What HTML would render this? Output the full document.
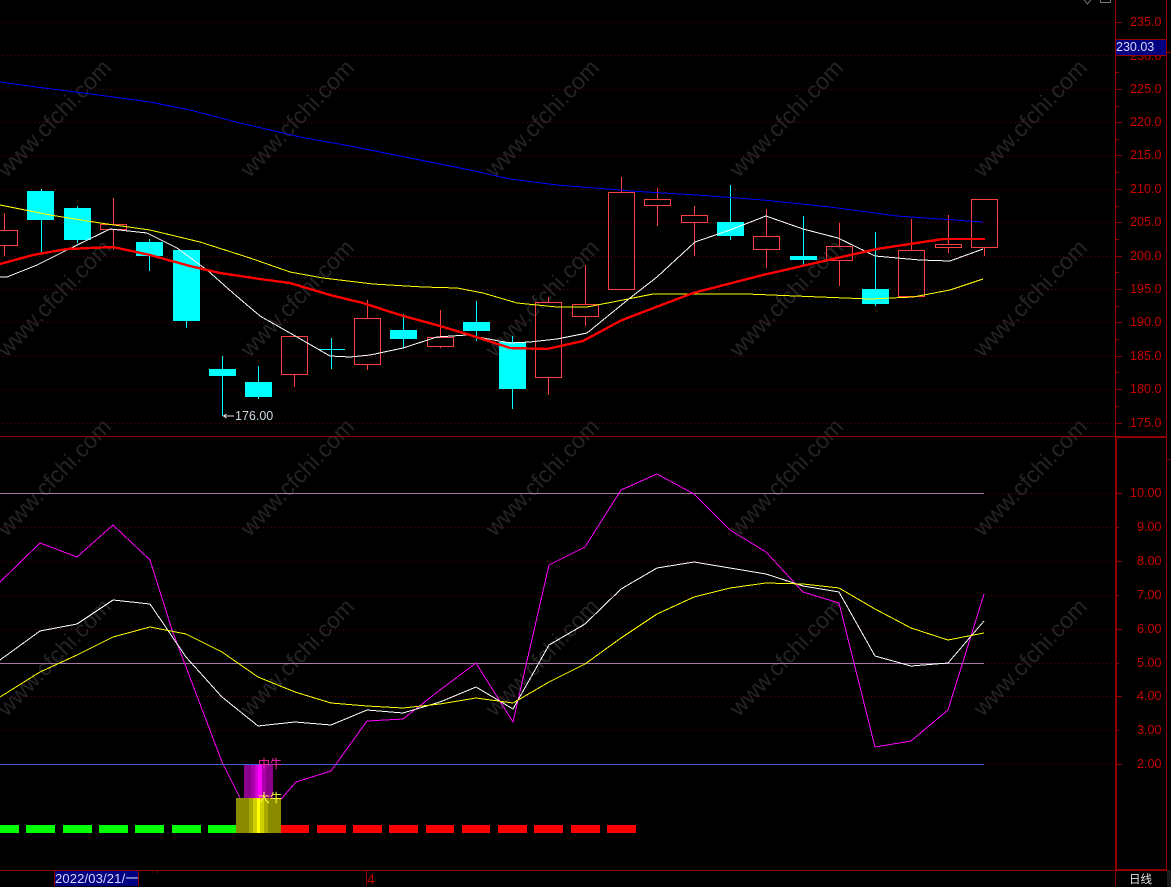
<!DOCTYPE html>
<html><head><meta charset="utf-8"><title>K</title>
<style>
html,body{margin:0;padding:0;background:#000;width:1171px;height:887px;overflow:hidden}
svg{display:block;font-family:"Liberation Sans","Noto Sans CJK SC",sans-serif}
.wm text{font-size:23px;fill:#242424;text-anchor:middle}
.ax text{font-size:12.6px;fill:#c80000;text-anchor:end}
.ln{fill:none;shape-rendering:crispEdges}
</style></head><body>
<svg width="1171" height="887" viewBox="0 0 1171 887" xmlns="http://www.w3.org/2000/svg">
<rect width="1171" height="887" fill="#000"/>
<g class="wm">
<text transform="translate(54,118) rotate(-46)" y="8">www.cfchi.com</text>
<text transform="translate(297,118) rotate(-46)" y="8">www.cfchi.com</text>
<text transform="translate(542,118) rotate(-46)" y="8">www.cfchi.com</text>
<text transform="translate(786,118) rotate(-46)" y="8">www.cfchi.com</text>
<text transform="translate(1030,118) rotate(-46)" y="8">www.cfchi.com</text>
<text transform="translate(54,298) rotate(-46)" y="8">www.cfchi.com</text>
<text transform="translate(297,298) rotate(-46)" y="8">www.cfchi.com</text>
<text transform="translate(542,298) rotate(-46)" y="8">www.cfchi.com</text>
<text transform="translate(786,298) rotate(-46)" y="8">www.cfchi.com</text>
<text transform="translate(1030,298) rotate(-46)" y="8">www.cfchi.com</text>
<text transform="translate(54,477) rotate(-46)" y="8">www.cfchi.com</text>
<text transform="translate(297,477) rotate(-46)" y="8">www.cfchi.com</text>
<text transform="translate(542,477) rotate(-46)" y="8">www.cfchi.com</text>
<text transform="translate(786,477) rotate(-46)" y="8">www.cfchi.com</text>
<text transform="translate(1030,477) rotate(-46)" y="8">www.cfchi.com</text>
<text transform="translate(54,657) rotate(-46)" y="8">www.cfchi.com</text>
<text transform="translate(297,657) rotate(-46)" y="8">www.cfchi.com</text>
<text transform="translate(542,657) rotate(-46)" y="8">www.cfchi.com</text>
<text transform="translate(786,657) rotate(-46)" y="8">www.cfchi.com</text>
<text transform="translate(1030,657) rotate(-46)" y="8">www.cfchi.com</text>
</g>
<!-- grid -->
<path d="M3 22.5H1112M3 55.5H1112M3 89.5H1112M3 122.5H1112M3 155.5H1112M3 189.5H1112M3 222.5H1112M3 256.5H1112M3 289.5H1112M3 322.5H1112M3 356.5H1112M3 389.5H1112M3 423.5H1112M3 493.5H1112M3 527.5H1112M3 561.5H1112M3 595.5H1112M3 629.5H1112M3 663.5H1112M3 696.5H1112M3 730.5H1112M3 764.5H1112" stroke="#640000" stroke-width="1" stroke-dasharray="1 3" fill="none" shape-rendering="crispEdges"/>
<!-- lower horizontals -->
<path d="M0 493.5H984" stroke="#a878a8" shape-rendering="crispEdges"/>
<path d="M0 663.5H984" stroke="#a878a8" shape-rendering="crispEdges"/>
<path d="M0 764.5H984" stroke="#3f5fd8" shape-rendering="crispEdges"/>
<!-- frame -->
<g shape-rendering="crispEdges">
<rect x="0" y="436" width="1116" height="1" fill="#900000"/>
<rect x="1115" y="0" width="1" height="436" fill="#a00000"/>
<rect x="1115" y="436" width="52" height="2" fill="#900000"/>
<rect x="1115" y="438" width="2" height="432" fill="#900000"/>
<rect x="1166" y="0" width="1" height="870" fill="#900000"/>
<rect x="0" y="870" width="1115" height="1" fill="#900000"/>
<rect x="1115" y="869" width="52" height="2" fill="#900000"/>
<rect x="1115" y="871" width="1" height="15" fill="#900000"/>
<rect x="1167" y="870" width="4" height="17" fill="#1c1c1c"/>
<rect x="1167" y="52" width="4" height="1" fill="#900000"/>
<rect x="1167" y="459" width="4" height="1" fill="#700000"/>
<path d="M1116 22.5h6M1116 55.5h6M1116 89.5h6M1116 122.5h6M1116 155.5h6M1116 189.5h6M1116 222.5h6M1116 256.5h6M1116 289.5h6M1116 322.5h6M1116 356.5h6M1116 389.5h6M1116 423.5h6M1116 39.5h3M1116 72.5h3M1116 106.5h3M1116 139.5h3M1116 172.5h3M1116 206.5h3M1116 239.5h3M1116 272.5h3M1116 306.5h3M1116 339.5h3M1116 372.5h3M1116 406.5h3M1117 493.5h5M1117 527.5h2M1117 561.5h5M1117 595.5h2M1117 629.5h5M1117 663.5h2M1117 696.5h5M1117 730.5h2M1117 764.5h5" stroke="#900000" fill="none"/>
</g>
<!-- axis labels -->
<g class="ax">
<text x="1161.5" y="26">235.0</text>
<text x="1161.5" y="60">230.0</text>
<text x="1161.5" y="93">225.0</text>
<text x="1161.5" y="126">220.0</text>
<text x="1161.5" y="159">215.0</text>
<text x="1161.5" y="193">210.0</text>
<text x="1161.5" y="226">205.0</text>
<text x="1161.5" y="260">200.0</text>
<text x="1161.5" y="293">195.0</text>
<text x="1161.5" y="326">190.0</text>
<text x="1161.5" y="360">185.0</text>
<text x="1161.5" y="393">180.0</text>
<text x="1161.5" y="427">175.0</text>
<text x="1161.5" y="497">10.00</text>
<text x="1161.5" y="531">9.00</text>
<text x="1161.5" y="565">8.00</text>
<text x="1161.5" y="599">7.00</text>
<text x="1161.5" y="633">6.00</text>
<text x="1161.5" y="667">5.00</text>
<text x="1161.5" y="700">4.00</text>
<text x="1161.5" y="734">3.00</text>
<text x="1161.5" y="768">2.00</text>
</g>
<!-- price tag -->
<rect x="1116" y="39" width="50" height="16" fill="#000080" shape-rendering="crispEdges"/>
<path d="M1116 39.5H1166M1116 55.5H1166" stroke="#900000" shape-rendering="crispEdges"/>
<text x="1116" y="51" font-size="12.5" fill="#d8d8ff">230.03</text>
<!-- top icons -->
<path d="M1083.5 -1L1087.5 4L1091.5 -1" stroke="#777" fill="none"/>
<path d="M1100.5 0V2.5H1110.5V0" stroke="#777" fill="none" shape-rendering="crispEdges"/>
<!-- cyan candles -->
<g shape-rendering="crispEdges">
<path d="M41.5 189V252M77.5 206V243M149.5 239V271M186.5 250V328M222.5 356V416M258.5 366V399M331.5 338V369M403.5 314V348M476.5 301V341M512.5 336V409M730.5 185V240M803.5 216V265M875.5 232V306" stroke="#00ffff" fill="none"/>
<path d="M318 349.5H345M790 258H817" stroke="#00ffff" fill="none"/>
<g fill="#00ffff">
<rect x="27" y="191" width="27" height="29"/>
<rect x="64" y="208" width="27" height="32"/>
<rect x="136" y="242" width="27" height="14"/>
<rect x="173" y="250" width="27" height="71"/>
<rect x="209" y="369" width="27" height="7"/>
<rect x="245" y="382" width="27" height="15"/>
<rect x="390" y="330" width="27" height="9"/>
<rect x="463" y="322" width="27" height="9"/>
<rect x="499" y="342" width="27" height="47"/>
<rect x="717" y="222" width="27" height="14"/>
<rect x="790" y="256" width="27" height="4"/>
<rect x="862" y="289" width="27" height="15"/>
</g>
<!-- red candles -->
<path d="M4.5 213V230M4.5 245V256M113.5 198V224M113.5 230V250M294.5 374V387M367.5 300V318M367.5 365V370M440.5 310V337M440.5 347V348M548.5 297V302M548.5 378V395M585.5 265V304M585.5 317V326M621.5 177V192M657.5 188V199M657.5 206V226M694.5 206V215M694.5 223V256M766.5 209V236M766.5 250V268M839.5 223V246M839.5 261V286M911.5 219V250M948.5 215V244M948.5 248V253M984.5 248V256" stroke="#ff4040" fill="none"/>
<g fill="none" stroke="#ff4040">
<rect x="-9.5" y="230.5" width="27" height="15"/>
<rect x="100.5" y="224.5" width="26" height="5"/>
<rect x="281.5" y="336.5" width="26" height="38"/>
<rect x="354.5" y="318.5" width="26" height="46"/>
<rect x="427.5" y="337.5" width="26" height="9"/>
<rect x="535.5" y="302.5" width="26" height="75"/>
<rect x="572.5" y="304.5" width="26" height="12"/>
<rect x="608.5" y="192.5" width="26" height="97"/>
<rect x="644.5" y="199.5" width="26" height="6"/>
<rect x="681.5" y="215.5" width="26" height="7"/>
<rect x="753.5" y="236.5" width="26" height="13"/>
<rect x="826.5" y="246.5" width="26" height="14"/>
<rect x="898.5" y="250.5" width="26" height="46"/>
<rect x="935.5" y="244.5" width="26" height="3"/>
<rect x="971.5" y="199.5" width="26" height="48"/>
</g>
</g>
<!-- upper MAs -->
<polyline class="ln" stroke="#0000ff" stroke-width="1" points="0,82 40,87.5 83,93 113,97 150,102 190,110 240,123 300,137 350,146 400,156 470,170 510,179 557,185 620,190 630,191 697,195 763,200 830,207 897,216 983,222"/>
<polyline class="ln" stroke="#ffff00" stroke-width="1" points="0,205 50,215 100,223 150,230 200,242 250,258 290,272 323,278 373,284 423,287 457,288 483,293 517,303 557,307 587,307 623,300 653,294 747,294 820,297 870,299 913,297 950,290 983,279"/>
<polyline class="ln" stroke="#ffffff" stroke-width="1" points="0,277 7,277 37,265 67,250 110,229 147,233 177,248 207,270 233,293 260,316 297,337 330,356 350,357 370,355 403,348 437,337 467,335 510,343 530,342 557,339 587,333 630,298 657,277 695,242 730,230 766,216 803,229 838,238 875,256 897,258 920,260 950,261 983,249"/>
<polyline class="ln" stroke="#ff0000" stroke-width="2.4" points="0,264 33,255 67,249 113,247 150,255 190,266 220,273 260,279 290,283 330,295 363,303 400,315 440,326 470,335 510,348 547,349 583,341 620,321 630,317 693,293 763,275 837,258 877,249 943,239 985,239"/>
<!-- low label -->
<path d="M234 416H224M226.5 414L223.5 416L226.5 418" stroke="#e0e0e0" fill="none"/>
<text x="235" y="420" font-size="12.5" fill="#d0d8e0">176.00</text>
<!-- lower lines -->
<polyline class="ln" stroke="#ff00ff" stroke-width="1" points="0,582 40,543 77,557 113,525 150,560 172,630 222,762 240,798 258,825 282,798 296,782 331,771 367,721 403,719 440,690 476,663 513,722 549,565 585,547 621,490 657,474 694,494 730,530 766,552 803,592 839,603 875,747 911,741 948,710 984,594"/>
<polyline class="ln" stroke="#ffffff" stroke-width="1" points="0,660 40,631 77,624 113,600 150,604 186,657 222,697 258,726 295,722 331,725 367,710 403,713 440,702 476,687 513,709 549,645 585,624 621,589 657,568 694,562 730,568 766,574 803,586 839,592 875,656 911,666 948,663 984,621"/>
<polyline class="ln" stroke="#ffff00" stroke-width="1" points="0,697 40,672 77,655 113,637 150,627 186,634 222,652 258,677 295,692 331,703 367,706 403,708 440,704 476,698 513,703 549,682 585,664 621,638 657,614 694,597 730,588 766,583 803,584 839,588 875,609 911,628 948,640 984,633"/>
<!-- bars -->
<g shape-rendering="crispEdges">
<g fill="#00ff00">
<rect x="0" y="825" width="19" height="8"/><rect x="26" y="825" width="29" height="8"/><rect x="63" y="825" width="29" height="8"/><rect x="99" y="825" width="29" height="8"/><rect x="135" y="825" width="29" height="8"/><rect x="172" y="825" width="29" height="8"/><rect x="208" y="825" width="28" height="8"/>
</g>
<g fill="#ff0000">
<rect x="281" y="825" width="28" height="8"/><rect x="317" y="825" width="29" height="8"/><rect x="353" y="825" width="29" height="8"/><rect x="389" y="825" width="29" height="8"/><rect x="426" y="825" width="28" height="8"/><rect x="462" y="825" width="28" height="8"/><rect x="498" y="825" width="29" height="8"/><rect x="534" y="825" width="29" height="8"/><rect x="571" y="825" width="29" height="8"/><rect x="607" y="825" width="29" height="8"/>
</g>
<rect x="236" y="798" width="45" height="35" fill="#8b8b00"/>
<rect x="249" y="798" width="19" height="35" fill="#a8a800"/>
<rect x="253" y="798" width="11" height="35" fill="#d0d000"/>
<rect x="257" y="798" width="3" height="35" fill="#ffff00"/>
<rect x="244" y="764" width="29" height="34" fill="#8b008b"/>
<rect x="251" y="764" width="15" height="34" fill="#a800a8"/>
<rect x="255" y="764" width="7" height="34" fill="#d800d8"/>
<rect x="258" y="764" width="4" height="34" fill="#ff00ff"/>
<path d="M0 764.5H984" stroke="#3f5fd8"/>
</g>
<text x="258" y="768" font-size="12" fill="#ff20b0">中牛</text>
<text x="258" y="802" font-size="12" fill="#ffff40">大牛</text>
<!-- bottom bar -->
<rect x="55" y="871" width="83" height="15" fill="#000080" shape-rendering="crispEdges"/>
<path d="M54.5 871V886M138.5 871V886M366.5 871V886M157.5 871V873" stroke="#900000" fill="none" shape-rendering="crispEdges"/>
<text x="55" y="883" font-size="13" letter-spacing=".15" fill="#d8d8ff">2022/03/21/一</text>
<text x="367" y="884" font-size="14" fill="#c00000">4</text>
<text x="1129" y="883" font-size="11.5" fill="#e0e0e0">日线</text>
</svg>
</body></html>
